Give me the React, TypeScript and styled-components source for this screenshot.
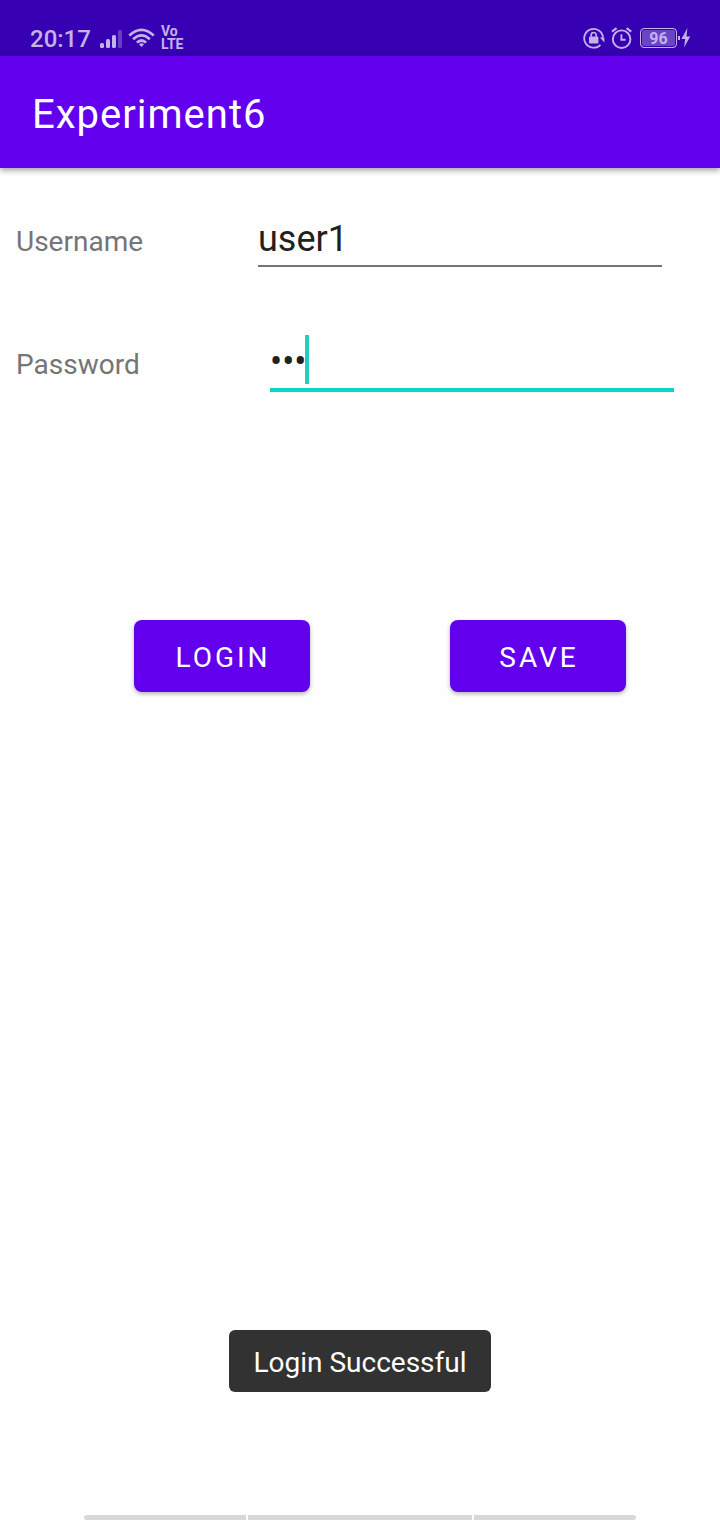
import React, { useState } from "react";
import styled, { createGlobalStyle } from "styled-components";

const GlobalStyle = createGlobalStyle`
  *, *::before, *::after { box-sizing: border-box; }
  body {
    margin: 0;
    background: #fefefe;
    font-family: Roboto, "Liberation Sans", sans-serif;
  }
`;

const Screen = styled.div`
  min-height: 100vh;
  display: flex;
  flex-direction: column;
`;

const StatusBar = styled.div`
  height: 56px;
  padding: 20px 28px 0 30px;
  display: flex;
  justify-content: space-between;
  background: #3700b3;
  color: #c3b3e8;
`;

const StatusGroup = styled.div<{ $gap: number }>`
  display: flex;
  align-items: center;
  gap: ${(p) => p.$gap}px;
  height: 36px;
`;

const Clock = styled.span`
  padding-top: 2px;
  font-size: 24px;
  font-weight: 500;
  line-height: 36px;
  margin-right: 3px;
`;

const Volte = styled.span`
  display: flex;
  flex-direction: column;
  font-size: 14px;
  font-weight: 700;
  line-height: 13px;
`;

const Battery = styled.span`
  display: flex;
  align-items: center;
  margin-left: 1px;
`;

const BatteryLevel = styled.span`
  width: 37px;
  height: 20px;
  border: 1px solid #c3b3e8;
  border-radius: 4px;
  box-shadow: inset 0 0 0 1px #3700b3;
  background: #6a43c6;
  font-size: 16px;
  font-weight: 700;
  line-height: 20px;
  text-align: center;
`;

const AppBar = styled.header`
  height: 112px;
  padding: 0 32px;
  display: flex;
  align-items: center;
  background: #6200ee;
  box-shadow: 0 2px 6px rgba(0, 0, 0, 0.4);
`;

const Title = styled.h1`
  margin: 0;
  padding-top: 6px;
  color: #fff;
  font-size: 40px;
  font-weight: 400;
  line-height: 48px;
  letter-spacing: 1px;
`;

const Form = styled.form`
  flex: 1;
  display: flex;
  flex-direction: column;
  padding-top: 47px;
`;

const FieldRow = styled.div<{ $indent?: number }>`
  display: flex;
  align-items: baseline;
  padding-left: 16px;
  padding-right: ${(p) => 58 - (p.$indent ?? 0)}px;

  & + & { margin-top: 71px; }
  & > label { flex-basis: ${(p) => 242 + (p.$indent ?? 0)}px; }
`;

const Label = styled.label`
  flex: none;
  color: #757575;
  font-size: 28px;
  line-height: 36px;
`;

const Field = styled.div`
  position: relative;
  flex: 1;
  min-width: 0;
  display: flex;
`;

const Input = styled.input<{ $active?: boolean }>`
  width: 100%;
  height: ${(p) => (p.$active ? 54 : 52)}px;
  padding: 0 0 2px;
  border: 0;
  border-bottom: ${(p) => (p.$active ? "4px solid #0bd6c4" : "2px solid #757575")};
  border-radius: 0;
  outline: 0;
  background: transparent;
  color: #212121;
  caret-color: transparent;
  font-family: inherit;
  font-size: 36px;
  line-height: 48px;
`;

const Caret = styled.span`
  position: absolute;
  left: 35px;
  bottom: 8px;
  width: 4px;
  height: 49px;
  background: #1fcfc0;
`;

const Actions = styled.div`
  display: flex;
  justify-content: center;
  gap: 140px;
  margin-top: 228px;
  padding-left: 40px;
`;

const Button = styled.button`
  width: 176px;
  height: 72px;
  padding: 4px 0 0 2px;
  border: 0;
  border-radius: 8px;
  background: #6200ee;
  box-shadow: 0 2px 4px rgba(0, 0, 0, 0.3);
  color: #fff;
  font-family: inherit;
  font-size: 28px;
  line-height: 36px;
  letter-spacing: 3px;
`;

const Toast = styled.div`
  align-self: center;
  margin-bottom: 123px;
  padding: 15px 24px 11px;
  border-radius: 6px;
  background: #323232;
  color: #fff;
  font-size: 28px;
  line-height: 36px;
`;

const NavHints = styled.nav`
  display: grid;
  grid-template-columns: 162fr 224fr 162fr;
  gap: 2px;
  height: 5px;
  padding: 0 84px;
`;

const NavHint = styled.span`
  background: #d8d8d8;

  &:first-child { border-radius: 3px 0 0 3px; }
  &:last-child { border-radius: 0 3px 3px 0; }
`;

const SignalIcon = () => (
  <svg width="22" height="20" viewBox="0 0 22 20" fill="currentColor">
    <rect x="0" y="15" width="4" height="5" rx="1.5" />
    <rect x="6" y="11" width="4" height="9" rx="1.5" />
    <rect x="12" y="7" width="4" height="13" rx="1.5" />
    <rect x="18" y="2" width="4" height="18" rx="1.5" opacity="0.35" />
  </svg>
);

const WifiIcon = () => (
  <svg width="27" height="20" viewBox="0 0 28 20" fill="none" stroke="currentColor" strokeWidth="2.8">
    <path d="M1.3 7.3Q14-4.3 26.7 7.3" />
    <path d="M5.3 11.2Q14 3.2 22.7 11.2" />
    <path d="M9.2 14.8Q14 10.4 18.8 14.8" />
    <path d="M11.4 16.6Q14 14.4 16.6 16.6L14 19.4Z" fill="currentColor" stroke="none" />
  </svg>
);

const RotationLockIcon = () => (
  <svg width="22" height="22" viewBox="0 0 22 22" fill="none" stroke="currentColor">
    <path d="M17.4 17.8A9.4 9.4 0 1 1 20 10.6" strokeWidth="1.8" />
    <path d="M16.8 10.4h4.6v5z" fill="currentColor" stroke="none" />
    <rect x="6" y="9.6" width="9.4" height="6.8" rx="1" fill="currentColor" stroke="none" />
    <path d="M8.2 9.8V8a2.5 2.5 0 0 1 5 0v1.8" strokeWidth="1.7" />
  </svg>
);

const AlarmIcon = () => (
  <svg width="22" height="22" viewBox="0 0 22 22" fill="none" stroke="currentColor" strokeWidth="1.9">
    <circle cx="10.6" cy="12.2" r="8.8" />
    <path d="M10.4 7.3V12.8H14.6" />
    <path d="M1 4.6 5.6 1.2M20.2 4.6 15.6 1.2" strokeWidth="2.2" />
  </svg>
);

const ChargingIcon = () => (
  <svg width="15" height="22" viewBox="0 0 15 22" fill="currentColor">
    <rect x="1" y="9" width="2" height="4" />
    <path d="M10.4 1 4.4 12H8.2L7 20.5 13.2 9.6H9.5Z" />
  </svg>
);

export default function App() {
  const [username, setUsername] = useState("user1");
  const [password, setPassword] = useState("123");

  return (
    <Screen>
      <GlobalStyle />
      <StatusBar>
        <StatusGroup $gap={6}>
          <Clock>20:17</Clock>
          <SignalIcon />
          <WifiIcon />
          <Volte>
            <span>Vo</span>
            <span>LTE</span>
          </Volte>
        </StatusGroup>
        <StatusGroup $gap={6}>
          <RotationLockIcon />
          <AlarmIcon />
          <Battery>
            <BatteryLevel>96</BatteryLevel>
            <ChargingIcon />
          </Battery>
        </StatusGroup>
      </StatusBar>
      <AppBar>
        <Title>Experiment6</Title>
      </AppBar>
      <Form onSubmit={(e) => e.preventDefault()}>
        <FieldRow>
          <Label htmlFor="username">Username</Label>
          <Field>
            <Input id="username" type="text" value={username} onChange={(e) => setUsername(e.target.value)} />
          </Field>
        </FieldRow>
        <FieldRow $indent={12}>
          <Label htmlFor="password">Password</Label>
          <Field>
            <Input id="password" type="password" $active value={password} onChange={(e) => setPassword(e.target.value)} />
            <Caret />
          </Field>
        </FieldRow>
        <Actions>
          <Button type="submit">LOGIN</Button>
          <Button type="button">SAVE</Button>
        </Actions>
      </Form>
      <Toast role="status">Login Successful</Toast>
      <NavHints>
        <NavHint />
        <NavHint />
        <NavHint />
      </NavHints>
    </Screen>
  );
}
